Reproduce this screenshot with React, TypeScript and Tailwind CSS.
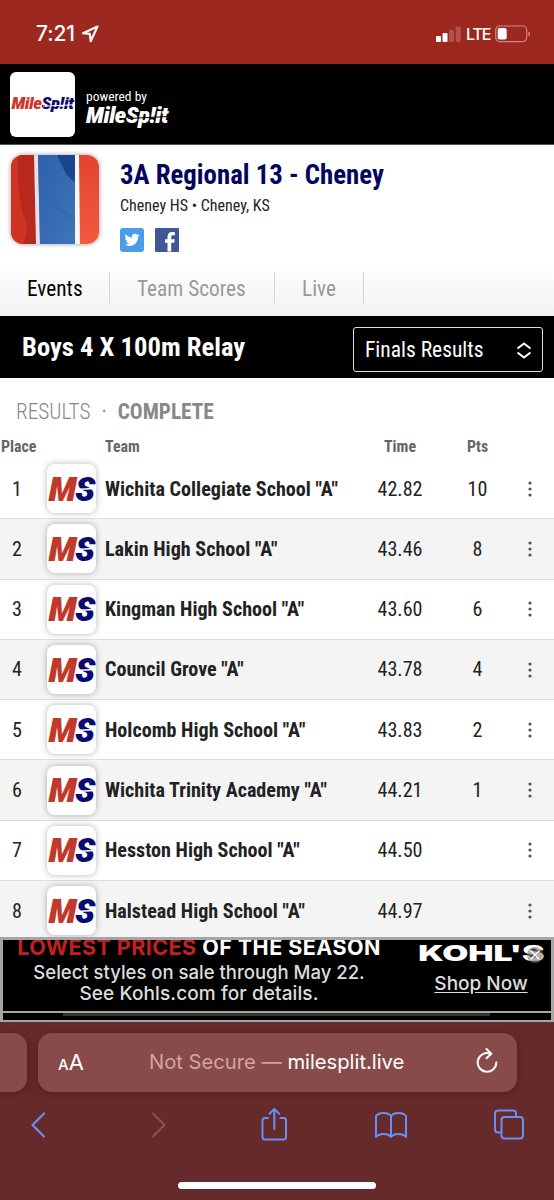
import React from 'react';

type Result = { place: number; team: string; time: string; pts: string };

const results: Result[] = [
  { place: 1, team: 'Wichita Collegiate School "A"', time: '42.82', pts: '10' },
  { place: 2, team: 'Lakin High School "A"', time: '43.46', pts: '8' },
  { place: 3, team: 'Kingman High School "A"', time: '43.60', pts: '6' },
  { place: 4, team: 'Council Grove "A"', time: '43.78', pts: '4' },
  { place: 5, team: 'Holcomb High School "A"', time: '43.83', pts: '2' },
  { place: 6, team: 'Wichita Trinity Academy "A"', time: '44.21', pts: '1' },
  { place: 7, team: 'Hesston High School "A"', time: '44.50', pts: '' },
  { place: 8, team: 'Halstead High School "A"', time: '44.97', pts: '' },
];

const StatusBar = () => (
  <div className="flex h-16 items-start justify-between bg-[#9d2820] pl-9 pr-[23px] pt-[22px] font-['Inter',sans-serif] text-white">
    <div className="flex items-center">
      <span className="text-[21px] font-medium leading-6 tracking-[-0.1px]">7:21</span>
      <svg className="ml-1.5 h-[18px] w-[18px]" viewBox="0 0 18 18" fill="none" stroke="white" strokeWidth="2.1" strokeLinejoin="round">
        <path d="M16.500 1.500 2 8.200l6.800.7.9 7.400z" />
      </svg>
    </div>
    <div className="flex items-center">
      <svg className="h-[17px] w-[25px]" viewBox="0 0 25 17" fill="white">
        <rect x="0" y="10" width="5" height="6" rx="1" />
        <rect x="6.5" y="7" width="5" height="9" rx="1" />
        <rect x="13" y="4" width="5" height="12" rx="1" opacity=".2" />
        <rect x="19.7" y="0.5" width="5" height="15.5" rx="1" opacity=".2" />
      </svg>
      <span className="ml-[5px] w-[24px] text-[16px] font-medium leading-6 tracking-[-1.1px]">LTE</span>
      <svg className="ml-[5px] h-[18px] w-[36px]" viewBox="0 0 36 18" fill="none">
        <rect x="0.7" y="1" width="31" height="15.6" rx="4" stroke="white" strokeOpacity=".45" strokeWidth="1.2" />
        <rect x="2.7" y="3" width="9" height="11.6" rx="2" fill="white" />
        <path d="M33.5 6.5v5c2-.7 2-4.300 0-5z" fill="white" fillOpacity=".5" />
      </svg>
    </div>
  </div>
);

const BrandBar = () => (
  <div className="flex h-[81px] border-b border-[#555] bg-black pl-[10px] pt-2">
    <div className="flex h-[65px] w-[65px] items-center justify-center rounded-md bg-white">
      <span className="relative inline-block scale-x-[1.13] whitespace-nowrap text-[16.500px] font-black italic leading-none tracking-[-0.4px] text-[#d0342c]">
        Mile<span className="text-[#0b0a6b]">Sp!it</span>
        <span className="absolute left-[28px] top-[9px] h-px w-[27px] -rotate-3 bg-white" />
      </span>
    </div>
    <div className="ml-[11px] pt-4 text-white">
      <div className="text-[13.500px] leading-4">powered by</div>
      <div className="relative mt-px inline-block origin-left scale-x-[1.130] text-[21.500px] font-black italic leading-none tracking-[-0.4px]">
        MileSp!it
        <span className="absolute left-[37px] top-[12px] h-px w-[36px] -rotate-3 bg-black" />
      </div>
    </div>
  </div>
);

const EventLogo = () => (
  <svg className="h-[89px] w-[88px] shrink-0 rounded-xl shadow-[0_0_5px_rgba(0,0,0,0.4)]" viewBox="0 0 88 89" preserveAspectRatio="none">
    <defs>
      <linearGradient id="blue" x1="0" y1="0" x2="1" y2="1">
        <stop offset="0" stopColor="#2c62ac" />
        <stop offset="1" stopColor="#3f74b8" />
      </linearGradient>
      <linearGradient id="red" x1="0" y1="0" x2="0" y2="1">
        <stop offset="0" stopColor="#e2452f" />
        <stop offset="1" stopColor="#f2593f" />
      </linearGradient>
    </defs>
    <rect width="88" height="89" fill="url(#red)" />
    <path d="M0 0h24l1 89H0z" fill="#cf3321" />
    <path d="M7 0h17l1 89H12c5-12 5-19 0-30C8 42 6 20 7 0z" fill="#b8291d" />
    <path d="M23 0h4l2 89h-4z" fill="#dfe3ee" />
    <path d="M27 0h38l-1 89H29z" fill="url(#blue)" />
    <path d="M46 0h18v27c-9-5-13-16-18-27z" fill="#19458e" />
    <path d="M42 48c8 6 12 12 20 14" stroke="#24569c" strokeWidth="2" fill="none" opacity=".25" />
    <path d="M64 0h4l1 89h-5z" fill="#f7f5f8" />
  </svg>
);

const EventHeader = () => (
  <div className="h-[171px] bg-linear-to-b from-white from-70% to-[#f1f1f1]">
    <div className="flex pl-[11px] pt-2.5">
      <EventLogo />
      <div className="ml-[21px]">
        <h1 className="mt-1 whitespace-nowrap text-[26.800px] font-bold leading-8 text-[#03045e]">3A Regional 13 - Cheney</h1>
        <p className="mt-px text-[16px] leading-7 text-[#222]">Cheney HS • Cheney, KS</p>
        <div className="mt-2 flex gap-[11px]">
          <svg className="h-6 w-6" viewBox="0 0 24 24">
            <rect width="24" height="24" rx="3" fill="#4a9ee8" />
            <path transform="translate(4.500 4.300) scale(.63)" d="M23.953 4.570a10 10 0 01-2.825.775 4.958 4.958 0 002.163-2.723c-.951.555-2.005.959-3.127 1.184a4.920 4.920 0 00-8.384 4.482C7.690 8.095 4.067 6.130 1.640 3.162a4.822 4.822 0 00-.666 2.475c0 1.710.870 3.213 2.188 4.096a4.904 4.904 0 01-2.228-.616v.060a4.923 4.923 0 003.946 4.827 4.996 4.996 0 01-2.212.085 4.936 4.936 0 004.604 3.417 9.867 9.867 0 01-6.102 2.105c-.390 0-.779-.023-1.170-.067a13.995 13.995 0 007.557 2.209c9.053 0 13.998-7.496 13.998-13.985 0-.210 0-.420-.015-.630A9.935 9.935 0 0024 4.590z" fill="white" />
          </svg>
          <svg className="h-6 w-6" viewBox="0 0 24 24">
            <rect width="24" height="24" rx="1" fill="#405796" />
            <path d="M12.500 23.500v-8.700H10v-3.600h2.500V8.700c0-3 1.700-4.700 4.500-4.700 1.300 0 2.600.2 2.900.2v3.100H18c-1.500 0-1.800.8-1.800 1.800v2.100h3.500l-.5 3.600h-3v8.700z" fill="white" />
          </svg>
        </div>
      </div>
    </div>
    <div className="mt-5 flex h-8 text-[21.300px] leading-[34px] text-[#999]">
      <div className="w-[110px] border-r border-[#d5d5d5] pl-[27px] text-black">Events</div>
      <div className="w-[165px] border-r border-[#d5d5d5] pl-[27px]">Team Scores</div>
      <div className="w-[89px] border-r border-[#d5d5d5] pl-[27px]">Live</div>
    </div>
  </div>
);

const RelayBar = () => (
  <div className="flex h-[62px] justify-between bg-black pl-[22px] pr-[11px] pt-[11px] text-white">
    <h2 className="text-[26.600px] font-bold leading-[39px]">Boys 4 X 100m Relay</h2>
    <div className="flex h-[45px] w-[190px] items-center justify-between rounded-[3px] border border-[#ddd] px-[11px] pt-px text-[21.500px]">
      Finals Results
      <svg className="-mr-px h-[17px] w-4" viewBox="0 0 16 17" fill="none" stroke="white" strokeWidth="2">
        <path d="M1.500 6.500 8 1.500l6.500 5M1.500 10.500l6.500 5 6.500-5" />
      </svg>
    </div>
  </div>
);

const TeamLogo = () => (
  <div className="relative flex h-[49px] w-[49px] items-center justify-center rounded-lg bg-white text-[34px] font-black italic leading-none tracking-[-1.500px] shadow-[0_0_6px_rgba(0,0,0,0.3)]">
    <div className="scale-x-[1.120]">
      <span className="text-[#c0392b]">M</span>
      <span className="text-[#0a0a70]">S</span>
    </div>
    <svg className="absolute left-[27px] top-[21px] h-2 w-[22px]" viewBox="0 0 22 8" stroke="white" strokeWidth="1.300">
      <path d="M2 4.500 20 3.500" />
    </svg>
  </div>
);

const Dots = () => (
  <svg className="h-4 w-1" viewBox="0 0 4 16" fill="#555">
    <circle cx="2" cy="2" r="1.600" />
    <circle cx="2" cy="8" r="1.600" />
    <circle cx="2" cy="14" r="1.600" />
  </svg>
);

const ResultsTable = () => (
  <div className="h-[559px] overflow-hidden bg-white">
    <div className="flex items-center pl-4 pt-[22px] text-[21.300px] leading-6 text-[#888]">
      <span className="font-light">RESULTS</span>
      <span className="mx-[11px]">·</span>
      <span className="font-bold">COMPLETE</span>
    </div>
    <div className="flex pt-[13px] text-[15.900px] font-bold leading-5 text-[#666]">
      <span className="w-[104px] pl-px">Place</span>
      <span className="w-[260px] pl-px">Team</span>
      <span className="w-[72px] text-center">Time</span>
      <span className="w-[83px] text-center">Pts</span>
    </div>
    <div className="pt-0.5">
      {results.map((r) => (
        <div key={r.place} className="flex h-[60.300px] items-center border-b border-[#ddd] bg-white text-[20.100px] text-[#222] even:bg-[#f4f4f4]">
          <span className="w-[47px] pr-[13px] text-center">{r.place}</span>
          <TeamLogo />
          <span className="w-[268px] whitespace-nowrap pl-[9px] font-bold">{r.team}</span>
          <span className="w-[72px] text-center">{r.time}</span>
          <span className="w-[83px] text-center">{r.pts}</span>
          <span className="ml-[9px]">
            <Dots />
          </span>
        </div>
      ))}
    </div>
  </div>
);

const AdBanner = () => (
  <div className="h-[85px] border-[3px] border-b-2 border-[#a5a5a5] bg-black font-['Inter',sans-serif] text-white">
    <div className="flex h-[73px] overflow-hidden border-b-2 border-[#a5a5a5]">
      <div className="w-[392px] whitespace-nowrap text-center">
        <div className="-mt-[5px] text-[21.500px] font-bold leading-6 tracking-[0.45px]">
          <span className="text-[#c4201f]">LOWEST PRICES</span> OF THE SEASON
        </div>
        <div className="mt-[3px] text-[18.500px] font-medium leading-[21px] text-[#ddd]">Select styles on sale through May 22.</div>
        <div className="text-[19px] font-medium leading-[21px] tracking-[0.1px] text-[#ddd]">See Kohls.com for details.</div>
      </div>
      <div className="relative flex w-[156px] flex-col items-center pl-4 pt-px">
        <span className="inline-block scale-x-[1.53] text-[22px] font-black leading-6">KOHL'S</span>
        <span className="mt-[7px] text-[19px] font-medium leading-6 text-[#ddd] underline underline-offset-2">Shop Now</span>
        <svg className="absolute right-2 top-[7px] h-4 w-4" viewBox="0 0 16 16">
          <circle cx="8" cy="8" r="8" fill="#777" fillOpacity=".6" />
          <path d="m3.500 3.500 9 9m0-9-9 9" stroke="white" strokeWidth="1.400" />
        </svg>
      </div>
    </div>
    <div className="ml-[60px] mr-[61px] h-[3px] bg-[#333]" />
  </div>
);

const Browser = () => (
  <div className="h-[178px] overflow-hidden bg-[#672a2a] pt-[11px] font-['Inter',sans-serif]">
    <div className="flex h-[59px] gap-[11px]">
      <div className="w-[27px] rounded-r-[14px] bg-[#894a4a] shadow-[0_2px_10px_rgba(60,0,0,0.3)]" />
      <div className="flex w-[479px] items-center rounded-[14px] bg-[#894a4a] pl-5 pr-[19px] text-white shadow-[0_2px_10px_rgba(60,0,0,0.3)]">
        <div className="flex w-[26px] items-baseline">
          <span className="text-[15px] font-medium">A</span>
          <span className="text-[22px]">A</span>
        </div>
        <span className="ml-[65px] whitespace-nowrap text-[20.200px] text-[#cfa5a5]">
          Not Secure — <span className="text-white">milesplit.live</span>
        </span>
        <svg className="mb-[3px] ml-auto h-[26px] w-[22px]" viewBox="0 0 22 26" fill="none" stroke="white" strokeWidth="2" strokeLinecap="round" strokeLinejoin="round">
          <path d="M14.500 5.800A9.300 9.300 0 1 0 20.300 14.500M10.500 1l4.800 4.700-4.800 4.500" />
        </svg>
      </div>
    </div>
    <svg className="mt-3 h-10 w-full" viewBox="0 0 554 40" fill="none" stroke="#6790f4" strokeWidth="2" strokeLinecap="round" strokeLinejoin="round">
      <path d="M44 9.500 32.500 21 44 32.500" strokeWidth="2.200" />
      <path d="M153 9.500 164.500 21 153 32.500" stroke="#8a5151" />
      <path d="M268 14h-3a2.500 2.500 0 0 0-2.500 2.500V33a2.500 2.500 0 0 0 2.500 2.500h18.500A2.500 2.500 0 0 0 286 33V16.500a2.500 2.500 0 0 0-2.500-2.500h-3M274.300 25V5M269.500 9.700l4.800-4.800 4.800 4.800" />
      <path d="M391 12c-3-4-12-4-15 0v21c3-4 12-4 15 0 3-4 12-4 15 0V12c-3-4-12-4-15 0zv21" />
      <path d="M501 28.500h-3a3 3 0 0 1-3-3V9.500a3 3 0 0 1 3-3h15a3 3 0 0 1 3 3v3" />
      <rect x="501.500" y="13" width="21.500" height="21.500" rx="3" />
    </svg>
    <div className="mx-auto mt-[38px] h-[7px] w-[198px] rounded-full bg-white" />
  </div>
);

export default function App() {
  return (
    <div className="h-[1200px] w-[554px] overflow-hidden bg-white font-['Roboto_Condensed','Roboto',sans-serif] font-stretch-condensed">
      <StatusBar />
      <BrandBar />
      <EventHeader />
      <RelayBar />
      <ResultsTable />
      <AdBanner />
      <Browser />
    </div>
  );
}
